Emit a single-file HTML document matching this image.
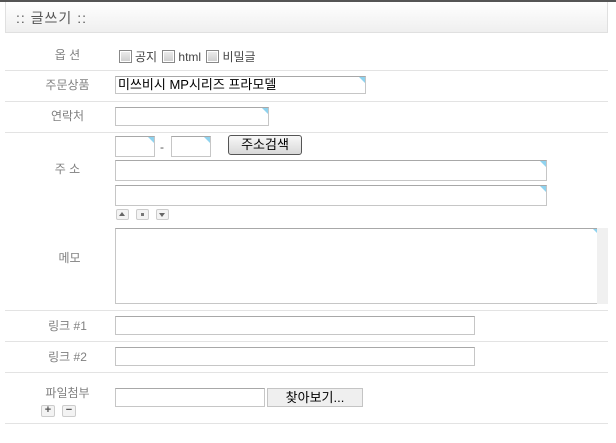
<!DOCTYPE html>
<html><head><meta charset="utf-8"><style>
body{margin:0;width:616px;height:443px;background:#fff;font-family:"Liberation Sans","Noto Sans CJK KR","NanumGothic",sans-serif;font-size:12px;position:relative;overflow:hidden}
.a{position:absolute}
.hl{position:absolute;left:5px;width:603px;height:1px;background:#e3e3e3}
.lb{position:absolute;left:20px;width:95px;text-align:center;color:#808080;font-size:12px}
.in{position:absolute;border:1px solid #c6c6c6;border-top-color:#a8a8a8;background:#fff;box-sizing:border-box}
.tri:after{content:"";position:absolute;right:0;top:0;border-top:6px solid #8fd3ef;border-left:6px solid transparent}
.cb{display:inline-block;width:11px;height:11px;border:1px solid #888;background:linear-gradient(#eee,#ccc);vertical-align:-2px;margin-right:3px;box-shadow:inset 0 0 0 1px #fff}
.sb{position:absolute;width:13px;height:11px;border:1px solid #ccc;border-radius:2px;background:#f3f3f3;box-sizing:border-box}
</style></head><body>
<div class="a" style="left:0;top:0;width:616px;height:2px;background:#555"></div>
<div class="a" style="left:5px;top:2px;width:603px;height:31px;border:1px solid #e0e0e0;border-top:none;box-sizing:border-box;background:linear-gradient(#fff,#efefef)"></div>
<div class="a" style="left:16px;top:8px;color:#555;font-size:14px;letter-spacing:1px">:: 글쓰기 ::</div>

<div class="lb" style="top:46px">옵 션</div>
<div class="a" style="left:119px;top:48px;color:#444"><span class="cb"></span>공지 <span class="cb" style="margin-left:2px"></span>html <span class="cb" style="margin-left:2px"></span>비밀글</div>
<div class="hl" style="top:70px"></div>

<div class="lb" style="top:76px">주문상품</div>
<div class="in tri" style="left:115px;top:76px;width:251px;height:18px;font-size:13px;color:#000;padding-left:2px;line-height:16px">미쓰비시 MP시리즈 프라모델</div>
<div class="hl" style="top:101px"></div>

<div class="lb" style="top:107px">연락처</div>
<div class="in tri" style="left:115px;top:107px;width:154px;height:19px"></div>
<div class="hl" style="top:132px"></div>

<div class="in tri" style="left:115px;top:136px;width:40px;height:21px"></div>
<div class="a" style="left:160px;top:140px;color:#555">-</div>
<div class="in tri" style="left:171px;top:136px;width:40px;height:21px"></div>
<div class="a" style="left:228px;top:135px;width:74px;height:20px;border:1px solid #555;border-radius:3px;box-sizing:border-box;background:linear-gradient(#f8f8f8,#d8d8d8);text-align:center;font-size:13px;line-height:17px">주소검색</div>
<div class="lb" style="top:160px">주 소</div>
<div class="in tri" style="left:115px;top:160px;width:432px;height:21px"></div>
<div class="in tri" style="left:115px;top:185px;width:432px;height:21px"></div>
<div class="sb" style="left:116px;top:209px"></div><div class="a" style="left:119px;top:212px;border-bottom:4px solid #666;border-left:3px solid transparent;border-right:3px solid transparent"></div>
<div class="sb" style="left:136px;top:209px"></div><div class="a" style="left:141px;top:213px;width:3px;height:3px;background:#777"></div>
<div class="sb" style="left:156px;top:209px"></div><div class="a" style="left:159px;top:213px;border-top:4px solid #666;border-left:3px solid transparent;border-right:3px solid transparent"></div>
<div class="lb" style="top:249px;left:22px">메모</div>
<div class="in tri" style="left:115px;top:228px;width:484px;height:76px;border-right:none"></div>
<div class="a" style="left:597px;top:228px;width:11px;height:76px;background:#f0f0f0"></div>
<div class="hl" style="top:310px"></div>

<div class="lb" style="top:317px">링크 #1</div>
<div class="in" style="left:115px;top:316px;width:360px;height:19px"></div>
<div class="hl" style="top:341px"></div>
<div class="lb" style="top:348px">링크 #2</div>
<div class="in" style="left:115px;top:347px;width:360px;height:19px"></div>
<div class="hl" style="top:372px"></div>

<div class="lb" style="top:384px">파일첨부</div>
<div class="sb" style="left:41px;top:405px;width:14px;height:12px;text-align:center;line-height:9px;font-size:11px;color:#555;font-weight:bold">+</div>
<div class="sb" style="left:62px;top:405px;width:14px;height:12px;text-align:center;line-height:9px;font-size:11px;color:#555;font-weight:bold">−</div>
<div class="in" style="left:115px;top:388px;width:150px;height:19px"></div>
<div class="a" style="left:267px;top:388px;width:96px;height:19px;border:1px solid #c4c4c4;box-sizing:border-box;background:#efefef;text-align:center;font-size:13px;line-height:17px">찾아보기...</div>
<div class="hl" style="top:423px"></div>
</body></html>
